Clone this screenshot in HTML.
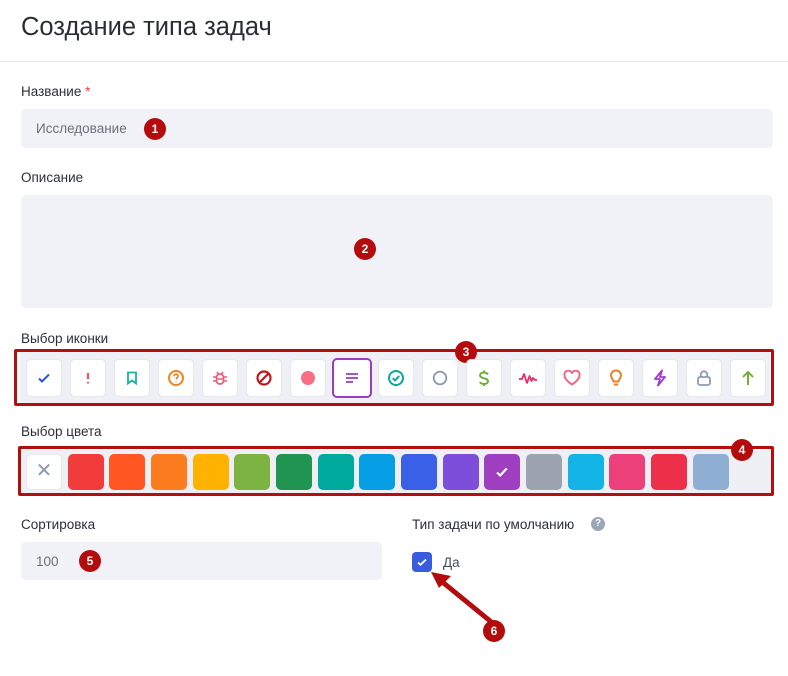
<!DOCTYPE html>
<html><head><meta charset="utf-8"><style>
*{box-sizing:border-box;margin:0;padding:0}
body{width:788px;height:676px;background:#fff;font-family:"Liberation Sans",sans-serif;color:#2b2f38;position:relative;overflow:hidden}
.abs{position:absolute}
h1{position:absolute;left:21px;top:13px;font-size:25.5px;font-weight:400;color:#2a2d33}
.hr{position:absolute;left:0;top:61px;width:788px;height:1px;background:#e6e8ee}
.lbl{position:absolute;font-size:13.5px;color:#2b2f38}
.inp{position:absolute;background:#f1f2f7;border-radius:5px}
.badge{position:absolute;width:22px;height:22px;border-radius:50%;background:#b40c0c;color:#fff;font-size:12px;font-weight:700;text-align:center;line-height:22px}
.red{position:absolute;border:3px solid #b30f0f;border-radius:2px}
.strip{position:absolute;background:#eff0f6}
.ib{position:absolute;top:359px;width:36px;height:38px;background:#fff;border:1px solid #e6e8ee;border-radius:5px;display:flex;align-items:center;justify-content:center}
.sw{position:absolute;top:454px;width:36px;height:36px;border-radius:5px}
</style></head><body>
<h1>Создание типа задач</h1>
<div class="hr"></div>
<div class="lbl" style="left:21px;top:84px">Название <span style="color:#e5484d">*</span></div>
<div class="inp" style="left:21px;top:109px;width:752px;height:39px"></div>
<div class="abs" style="left:36px;top:121px;font-size:13.5px;color:#6b6f7a">Исследование</div>
<div class="badge" style="left:144px;top:118px">1</div>
<div class="lbl" style="left:21px;top:170px">Описание</div>
<div class="inp" style="left:21px;top:195px;width:752px;height:113px"></div>
<div class="badge" style="left:354px;top:238px">2</div>
<div class="lbl" style="left:21px;top:331px">Выбор иконки</div>
<div class="strip" style="left:20px;top:352px;width:750px;height:51px"></div>
<div class="red" style="left:14px;top:349px;width:760px;height:57px"></div>
<div class="badge" style="left:455px;top:341px">3</div>

<div class="ib" style="left:26px"><svg width="16" height="16" viewBox="0 0 16 16"><path d="M3 8.5l3 3 7-7" fill="none" stroke="#2d54d6" stroke-width="2"/></svg></div>
<div class="ib" style="left:70px"><svg width="16" height="16"><path d="M8 3v6M8 12v1.5" stroke="#f0546a" stroke-width="2.2"/></svg></div>
<div class="ib" style="left:114px"><svg width="16" height="16"><path d="M4 2.5h8v11l-4-3-4 3z" fill="none" stroke="#12b59a" stroke-width="1.8"/></svg></div>
<div class="ib" style="left:158px"><svg width="18" height="18"><circle cx="9" cy="9" r="7" fill="none" stroke="#f5811f" stroke-width="2"/><path d="M7 7.3a2 2 0 1 1 2.5 1.8V10.5M9 12.5v.6" fill="none" stroke="#f5811f" stroke-width="1.7"/></svg></div>
<div class="ib" style="left:202px"><svg width="18" height="18"><rect x="5.5" y="5" width="7" height="10" rx="3.5" fill="none" stroke="#f05a78" stroke-width="1.7"/><path d="M2 8h3.5M12.5 8H16M2 12h3.5M12.5 12H16M6 3l1.5 2M12 3l-1.5 2M6 10h6" stroke="#f05a78" stroke-width="1.5"/></svg></div>
<div class="ib" style="left:246px"><svg width="18" height="18"><circle cx="9" cy="9" r="6.5" fill="none" stroke="#c5161d" stroke-width="2.2"/><path d="M4.5 13.5l9-9" stroke="#c5161d" stroke-width="2.2"/></svg></div>
<div class="ib" style="left:290px"><svg width="16" height="16"><circle cx="8" cy="8" r="7" fill="#f86f83"/></svg></div>
<div class="ib" style="left:332px;top:358px;width:40px;height:40px;border:2px solid #9b3cc0"><svg width="16" height="16"><path d="M2 4h12M2 8h12M2 12h7" stroke="#9b3cc0" stroke-width="1.8"/></svg></div>
<div class="ib" style="left:378px"><svg width="18" height="18"><circle cx="9" cy="9" r="7" fill="none" stroke="#0ea79a" stroke-width="2"/><path d="M5.8 9.2l2.2 2.2 4.2-4.4" fill="none" stroke="#0ea79a" stroke-width="2"/></svg></div>
<div class="ib" style="left:422px"><svg width="16" height="16"><circle cx="8" cy="8" r="6.3" fill="none" stroke="#8e9bb0" stroke-width="1.9"/></svg></div>
<div class="ib" style="left:466px"><svg width="16" height="18"><path d="M12 5.5C11 4 10 3.5 8 3.5 5.5 3.5 4 4.7 4 6.3c0 4 8 2 8 6 0 1.6-1.5 2.7-4 2.7-2 0-3.3-.6-4.2-2M8 1.5v2M8 15v2" fill="none" stroke="#6aae36" stroke-width="1.9"/></svg></div>
<div class="ib" style="left:510px"><svg width="20" height="16"><path d="M1 9h3l2-5 3 9 2.5-7 2 5 1.5-3 2 2h2" fill="none" stroke="#ea2d6a" stroke-width="1.8" stroke-linejoin="round"/></svg></div>
<div class="ib" style="left:554px"><svg width="18" height="16"><path d="M9 14.5S1.5 10 1.5 5.3A3.7 3.7 0 0 1 9 3.6a3.7 3.7 0 0 1 7.5 1.7C16.5 10 9 14.5 9 14.5z" fill="none" stroke="#f2607d" stroke-width="1.9"/></svg></div>
<div class="ib" style="left:598px"><svg width="16" height="18"><path d="M5.5 12.5c0-2-2.5-3-2.5-6a5 5 0 0 1 10 0c0 3-2.5 4-2.5 6zM6 15.5h4" fill="none" stroke="#f57a19" stroke-width="1.9"/></svg></div>
<div class="ib" style="left:642px"><svg width="16" height="18"><path d="M10 1.5L3 10h5l-2 6.5L13 8H8z" fill="none" stroke="#a23ad0" stroke-width="1.8" stroke-linejoin="round"/></svg></div>
<div class="ib" style="left:686px"><svg width="16" height="18"><rect x="2" y="8" width="12" height="8" rx="2" fill="none" stroke="#8e9bb0" stroke-width="1.8"/><path d="M4.8 8V5.5a3.2 3.2 0 0 1 6.4 0V8" fill="none" stroke="#8e9bb0" stroke-width="1.8"/></svg></div>
<div class="ib" style="left:730px"><svg width="16" height="18"><path d="M8 16V3M3 8l5-5 5 5" fill="none" stroke="#6aae36" stroke-width="1.9"/></svg></div>

<div class="lbl" style="left:21px;top:424px">Выбор цвета</div>
<div class="strip" style="left:22px;top:450px;width:750px;height:43px"></div>
<div class="red" style="left:18px;top:446px;width:756px;height:50px"></div>
<div class="badge" style="left:731px;top:439px">4</div>
<div class="sw" style="left:26px;background:#fff;border:1px solid #e6e8ee;color:#8e9bb0;font-size:20px;text-align:center;line-height:33px">✕</div>
<div class="sw" style="left:68px;background:#f23c3c"></div>
<div class="sw" style="left:109px;background:#ff5622"></div>
<div class="sw" style="left:151px;background:#fd7c1f"></div>
<div class="sw" style="left:193px;background:#ffb300"></div>
<div class="sw" style="left:234px;background:#7cb342"></div>
<div class="sw" style="left:276px;background:#209450"></div>
<div class="sw" style="left:318px;background:#00ab9e"></div>
<div class="sw" style="left:359px;background:#069ee4"></div>
<div class="sw" style="left:401px;background:#3960e6"></div>
<div class="sw" style="left:443px;background:#7c4ed9"></div>
<div class="sw" style="left:484px;background:#9d3fc0;display:flex;align-items:center;justify-content:center"><svg width="16" height="16"><path d="M3 8.5l3.2 3 6.5-7" fill="none" stroke="#fff" stroke-width="2.2"/></svg></div>
<div class="sw" style="left:526px;background:#9ca4b0"></div>
<div class="sw" style="left:568px;background:#13b3e6"></div>
<div class="sw" style="left:609px;background:#ec407a"></div>
<div class="sw" style="left:651px;background:#ee2f4a"></div>
<div class="sw" style="left:693px;background:#8eaed4"></div>

<div class="lbl" style="left:21px;top:517px">Сортировка</div>
<div class="inp" style="left:21px;top:542px;width:361px;height:38px"></div>
<div class="abs" style="left:36px;top:554px;font-size:13.5px;color:#6b6f7a">100</div>
<div class="badge" style="left:79px;top:550px">5</div>
<div class="lbl" style="left:412px;top:517px">Тип задачи по умолчанию</div>
<div class="abs" style="left:591px;top:517px;width:14px;height:14px;border-radius:50%;background:#9aa6b8;color:#fff;font-size:10px;font-weight:700;text-align:center;line-height:14px">?</div>
<div class="abs" style="left:412px;top:552px;width:20px;height:20px;border-radius:4px;background:#3a5de0;display:flex;align-items:center;justify-content:center"><svg width="12" height="12"><path d="M2 6.5l2.5 2.3L10 3.5" fill="none" stroke="#fff" stroke-width="1.8"/></svg></div>
<div class="abs" style="left:443px;top:555px;font-size:13.5px;color:#4a4e58">Да</div>
<svg class="abs" style="left:425px;top:568px" width="80" height="65"><path d="M70 57L15 12" stroke="#b40c0c" stroke-width="5"/><path d="M6 4l20 4-12 12z" fill="#b40c0c"/></svg>
<div class="badge" style="left:483px;top:620px">6</div>
</body></html>
